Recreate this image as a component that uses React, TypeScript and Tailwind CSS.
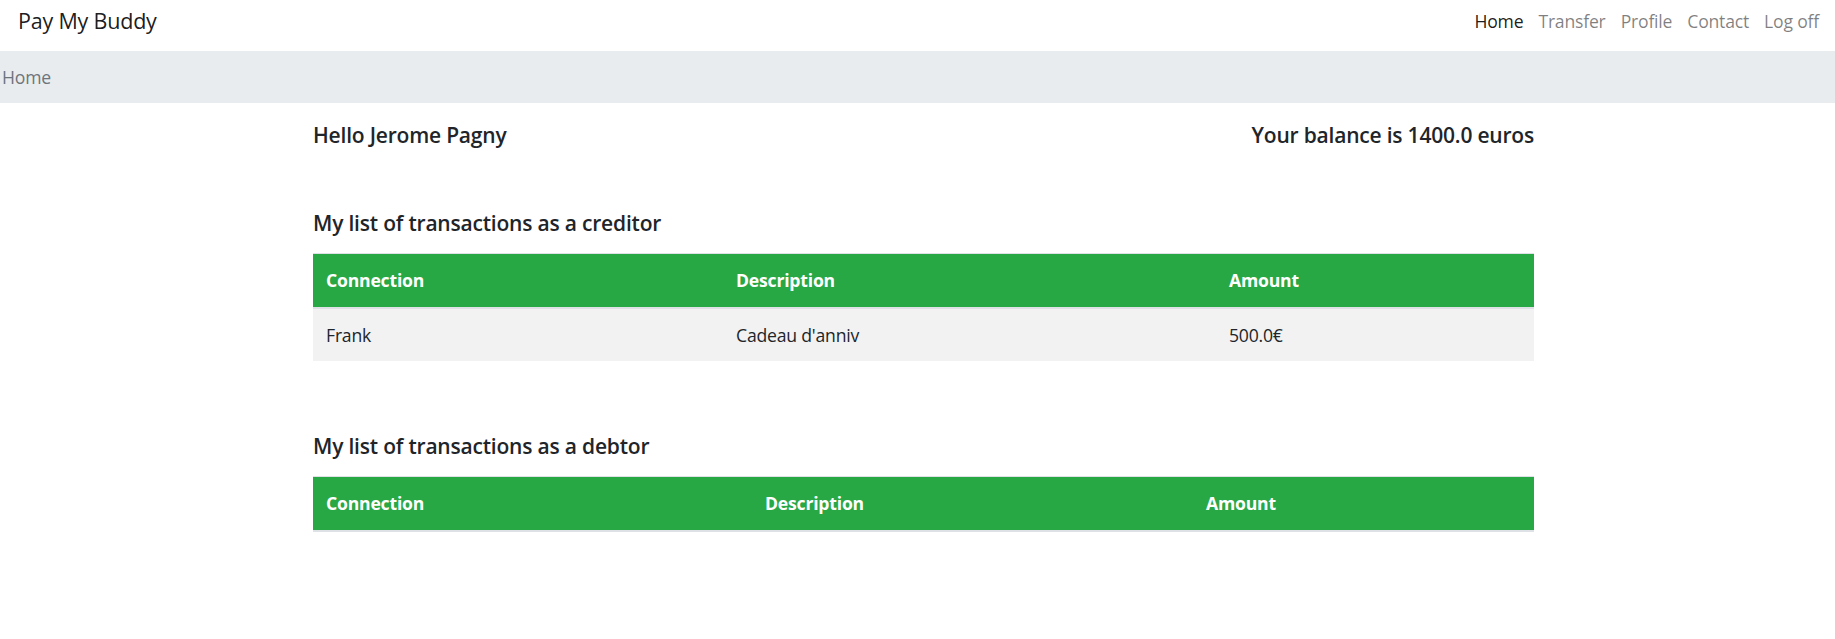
import React from 'react';

type Tx = { connection: string; description: string; amount: string };

const CREDITOR: Tx[] = [{ connection: 'Frank', description: "Cadeau d'anniv", amount: '500.0€' }];
const DEBTOR: Tx[] = [];

const NAV = ['Home', 'Transfer', 'Profile', 'Contact', 'Log off'];

function TxTable({ rows, cols }: { rows: Tx[]; cols: [string, string, string] }) {
  return (
    <table className="w-full border-collapse text-left">
      <colgroup>
        <col className={cols[0]} />
        <col className={cols[1]} />
        <col className={cols[2]} />
      </colgroup>
      <thead>
        <tr className="bg-[#28a745] text-white">
          <th className="border-t border-b-2 border-[#dee2e6] px-[13px] py-[13px] font-bold">Connection</th>
          <th className="border-t border-b-2 border-[#dee2e6] px-[13px] py-[13px] font-bold">Description</th>
          <th className="border-t border-b-2 border-[#dee2e6] px-[13px] py-[13px] font-bold">Amount</th>
        </tr>
      </thead>
      <tbody>
        {rows.map((r, i) => (
          <tr key={i} className="bg-[#f2f2f2]">
            <td className="border-t border-[#dee2e6] px-[13px] py-[13px]">{r.connection}</td>
            <td className="border-t border-[#dee2e6] px-[13px] py-[13px]">{r.description}</td>
            <td className="border-t border-[#dee2e6] px-[13px] py-[13px]">{r.amount}</td>
          </tr>
        ))}
      </tbody>
    </table>
  );
}

export default function App() {
  return (
    <div className="min-h-screen bg-white font-['Open_Sans',sans-serif] text-[17.6px] leading-[1.5] tracking-[-0.2px] text-[#212529]">
      {/* Top navbar */}
      <nav className="flex h-[51px] items-center justify-between pb-[9px] pl-[18px] pr-[16px]">
        <span className="text-[21.5px] leading-none text-[rgba(0,0,0,0.9)]">Pay My Buddy</span>
        <ul className="flex gap-[15px]">
          {NAV.map((n, i) => (
            <li key={n} className={i === 0 ? 'text-[rgba(0,0,0,0.9)]' : 'text-[rgba(0,0,0,0.5)]'}>
              {n}
            </li>
          ))}
        </ul>
      </nav>

      {/* Breadcrumb */}
      <div className="flex h-[52px] items-center bg-[#e9ecef] pl-[2px] text-[#6c757d]">Home</div>

      <main className="ml-[313px] w-[1221px]">
        <div className="mt-[20px] flex items-center justify-between text-[21px] leading-[1.2] font-semibold">
          <h5>Hello Jerome Pagny</h5>
          <h5>Your balance is 1400.0 euros</h5>
        </div>

        <h5 className="mt-[63px] mb-[17px] text-[21px] leading-[1.2] font-semibold">My list of transactions as a creditor</h5>
        <TxTable rows={CREDITOR} cols={['w-[410px]', 'w-[493px]', 'w-[318px]']} />

        <h5 className="mt-[73px] mb-[17px] text-[21px] leading-[1.2] font-semibold">My list of transactions as a debtor</h5>
        <TxTable rows={DEBTOR} cols={['w-[439px]', 'w-[441px]', 'w-[341px]']} />
      </main>
    </div>
  );
}
